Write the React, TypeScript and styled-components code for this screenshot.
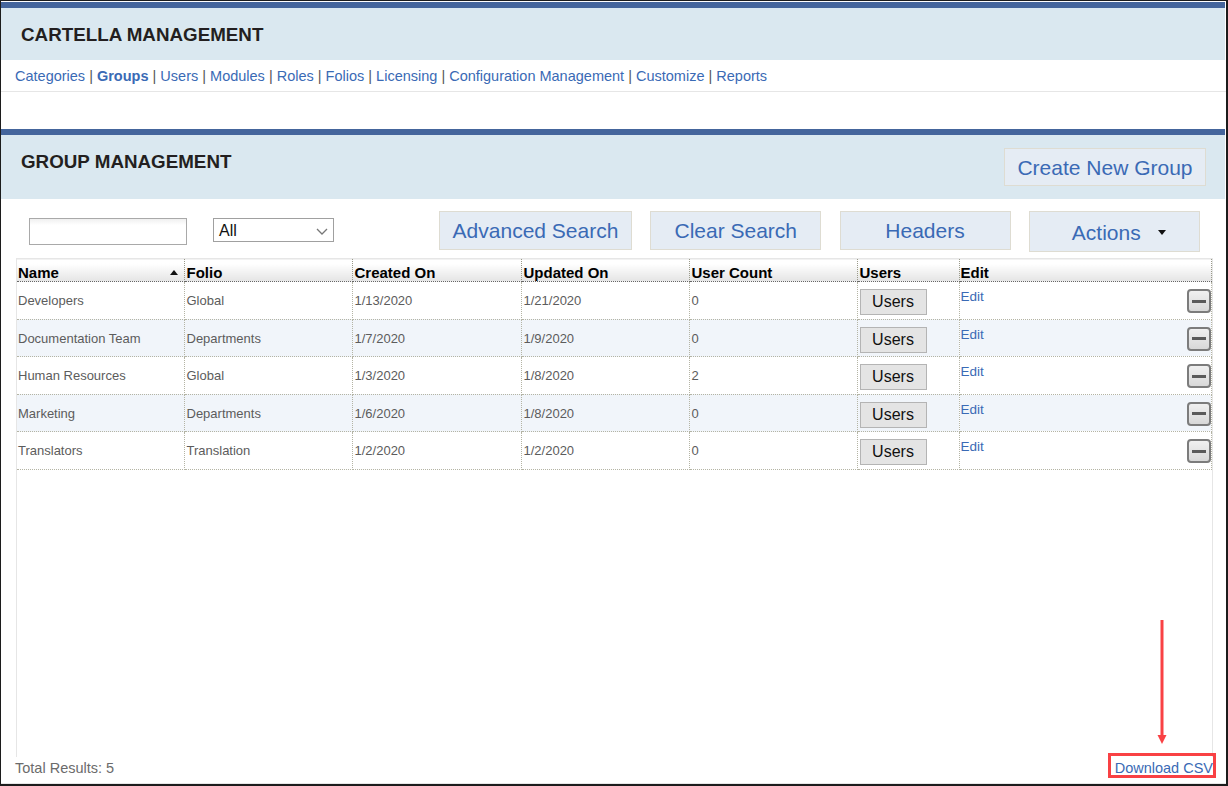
import styled, { createGlobalStyle } from 'styled-components';

const GlobalStyle = createGlobalStyle`
    html, body, #root {
        height: 100%;
        margin: 0;
    }
    body {
        font-family: "Liberation Sans", Arial, sans-serif;
        background: #fff;
    }
    * {
        box-sizing: border-box;
    }
`

const Frame = styled.div`
    position: relative;
    display: flex;
    flex-direction: column;
    width: 1228px;
    height: 786px;
    overflow: hidden;
    padding-top: 1px;
    border: solid #1c1c1c;
    border-width: 1px 2px 2px 1px;
    background: #fff;
`

const Banner = styled.header<{ $height: number }>`
    display: flex;
    justify-content: space-between;
    flex-shrink: 0;
    height: ${p => p.$height}px;
    margin-right: 1px;
    padding: 0 19px 0 20px;
    border-top: 6px solid #44659c;
    background: #dae8f0;
`

const Title = styled.h1<{ $top: number }>`
    margin: ${p => p.$top}px 0 0;
    color: #231f20;
    font-size: 18.8px;
    font-weight: 700;
    line-height: 22px;
`

const Nav = styled.nav`
    flex-shrink: 0;
    height: 32px;
    padding: 7px 0 0 14px;
    border-bottom: 1px solid #e6e6e6;
    color: #555;
    font-size: 14.5px;
    line-height: 18px;
`

const NavLink = styled.a<{ $active?: boolean }>`
    color: #3a6ab5;
    font-weight: ${p => (p.$active ? 700 : 400)};
`

const Spacer = styled.div`
    flex-shrink: 0;
    height: 37px;
`

const ActionButton = styled.button<{ $width: number }>`
    flex-shrink: 0;
    width: ${p => p.$width}px;
    height: 39px;
    padding: 0;
    border: 1px solid #dedcd2;
    background: #e5ecf4;
    color: #3a6ab5;
    font-family: inherit;
    font-size: 21px;
    line-height: 37px;
`

const CreateButton = styled(ActionButton)`
    height: 38px;
    margin-top: 13px;
`

const Toolbar = styled.div`
    display: flex;
    flex-shrink: 0;
    align-items: flex-start;
    height: 59px;
    padding: 12px 0 0 28px;
`

const SearchInput = styled.input`
    width: 158px;
    height: 27px;
    margin-top: 7px;
    border: 1px solid #a9a9a9;
    background: linear-gradient(#f0f0f0, #fff 6px);
`

const FilterSelect = styled.div`
    display: flex;
    align-items: center;
    justify-content: space-between;
    width: 121px;
    height: 24px;
    margin: 7px 105px 0 26px;
    padding: 2px 5px 0 5px;
    border: 1px solid #a0a0a0;
    color: #111;
    font-size: 16px;
`

const ToolbarButtons = styled.div`
    display: flex;
    gap: 18.25px;
`

const ActionsButton = styled(ActionButton)`
    display: flex;
    align-items: center;
    justify-content: center;
    gap: 17px;
    height: 41px;
    padding: 1px 0 0 9px;
`

const Caret = styled.span`
    width: 0;
    height: 0;
    border-top: 5px solid #111;
    border-right: 4.5px solid transparent;
    border-left: 4.5px solid transparent;
`

const TablePanel = styled.div`
    flex: 1;
    margin: 0 13px 0 15px;
    border-right: 1px solid #e6e6e6;
    border-left: 1px solid #e6e6e6;
`

const Table = styled.table`
    width: 100%;
    border-collapse: collapse;
    table-layout: fixed;
`

const HeadCell = styled.th<{ $width?: number }>`
    width: ${p => (p.$width ? `${p.$width}px` : 'auto')};
    height: 23px;
    padding: 5px 0 0 2px;
    border-top: 1px solid #e6e6e6;
    border-right: 1px dotted #9a9a8a;
    border-bottom: 1px dotted #666;
    background: linear-gradient(#fff 20%, #e4e4e4);
    color: #000;
    font-size: 15px;
    font-weight: 700;
    line-height: 16px;
    text-align: left;
    vertical-align: middle;

    &:first-child,
    &:last-child {
        padding-left: 1px;
    }
`

const HeadInner = styled.div`
    display: flex;
    align-items: center;
    justify-content: space-between;
    padding-right: 6px;
`

const SortArrow = styled.span`
    width: 0;
    height: 0;
    border-right: 4.5px solid transparent;
    border-bottom: 5px solid #111;
    border-left: 4.5px solid transparent;
`

const Row = styled.tr<{ $striped: boolean }>`
    height: 37.5px;
    background: ${p => (p.$striped ? '#f1f5fa' : '#fff')};
`

const Cell = styled.td`
    padding: 2px 0 0 2px;
    border-right: 1px dotted #b4b4a4;
    border-bottom: 1px dotted #b4b4a4;
    color: #5c5c5c;
    font-size: 13px;
    line-height: 14px;
    vertical-align: middle;

    &:first-child {
        padding-left: 1px;
    }
`

const EditCell = styled(Cell)`
    position: relative;
    padding-bottom: 8px;
    padding-left: 1px;
`

const EditLink = styled.a`
    color: #3a6ab5;
    font-size: 13.5px;
`

const UsersButton = styled.button`
    display: block;
    width: 67px;
    height: 26px;
    margin: 2px 0 0;
    padding: 0;
    border: 1px solid #b4b4b4;
    background: #e4e4e4;
    color: #111;
    font-family: inherit;
    font-size: 16px;
`

const RemoveButton = styled.button`
    position: absolute;
    top: 7px;
    right: 0;
    display: flex;
    align-items: center;
    justify-content: center;
    width: 24px;
    height: 24px;
    padding: 0;
    border: 2px solid #7c7c7c;
    border-radius: 4px;
    background: linear-gradient(#f0f0f0, #d8d8d8);
`

const MinusBar = styled.span`
    width: 14px;
    height: 3px;
    background: #5a5a5a;
`

const Footer = styled.footer`
    display: flex;
    flex-shrink: 0;
    align-items: flex-start;
    justify-content: space-between;
    height: 27px;
    padding: 3px 13px 0 14px;
    border-bottom: 1px solid #e6e6e6;
    font-size: 14.5px;
    line-height: 16px;
`

const TotalResults = styled.span`
    color: #6b6b6b;
`

const DownloadLink = styled.a`
    color: #3a6ab5;
`

const Highlight = styled.div`
    position: absolute;
    top: 752px;
    left: 1107px;
    width: 108px;
    height: 25px;
    border: 3px solid #f94144;
    pointer-events: none;
`

const Arrow = styled.svg`
    position: absolute;
    top: 619px;
    left: 1154px;
    pointer-events: none;
`

const groups = [
    { name: 'Developers', folio: 'Global', created: '1/13/2020', updated: '1/21/2020', count: 0 },
    { name: 'Documentation Team', folio: 'Departments', created: '1/7/2020', updated: '1/9/2020', count: 0 },
    { name: 'Human Resources', folio: 'Global', created: '1/3/2020', updated: '1/8/2020', count: 2 },
    { name: 'Marketing', folio: 'Departments', created: '1/6/2020', updated: '1/8/2020', count: 0 },
    { name: 'Translators', folio: 'Translation', created: '1/2/2020', updated: '1/2/2020', count: 0 },
];

const navItems = [
    'Categories', 'Groups', 'Users', 'Modules', 'Roles', 'Folios',
    'Licensing', 'Configuration Management', 'Customize', 'Reports',
];

const App = () => (
    <Frame>
        <GlobalStyle />
        <Banner $height={58}>
            <Title $top={16}>CARTELLA MANAGEMENT</Title>
        </Banner>
        <Nav>
            {navItems.map((item, i) => (
                <span key={item}>
                    {i > 0 && ' | '}
                    <NavLink $active={item === 'Groups'}>{item}</NavLink>
                </span>
            ))}
        </Nav>
        <Spacer />
        <Banner $height={70}>
            <Title $top={16}>GROUP MANAGEMENT</Title>
            <CreateButton $width={202}>Create New Group</CreateButton>
        </Banner>
        <Toolbar>
            <SearchInput />
            <FilterSelect>
                All
                <svg width="12" height="7" viewBox="0 0 12 7" fill="none" stroke="#777" strokeWidth="1.3">
                    <path d="M1 1l5 5 5-5" />
                </svg>
            </FilterSelect>
            <ToolbarButtons>
                <ActionButton $width={193}>Advanced Search</ActionButton>
                <ActionButton $width={171}>Clear Search</ActionButton>
                <ActionButton $width={171}>Headers</ActionButton>
                <ActionsButton $width={171}>
                    Actions
                    <Caret />
                </ActionsButton>
            </ToolbarButtons>
        </Toolbar>
        <TablePanel>
            <Table>
                <thead>
                    <tr>
                        <HeadCell $width={167}>
                            <HeadInner>
                                Name
                                <SortArrow />
                            </HeadInner>
                        </HeadCell>
                        <HeadCell $width={168}>Folio</HeadCell>
                        <HeadCell $width={169}>Created On</HeadCell>
                        <HeadCell $width={168}>Updated On</HeadCell>
                        <HeadCell $width={168}>User Count</HeadCell>
                        <HeadCell $width={102}>Users</HeadCell>
                        <HeadCell>Edit</HeadCell>
                    </tr>
                </thead>
                <tbody>
                    {groups.map((group, i) => (
                        <Row key={group.name} $striped={i % 2 === 1}>
                            <Cell>{group.name}</Cell>
                            <Cell>{group.folio}</Cell>
                            <Cell>{group.created}</Cell>
                            <Cell>{group.updated}</Cell>
                            <Cell>{group.count}</Cell>
                            <Cell>
                                <UsersButton>Users</UsersButton>
                            </Cell>
                            <EditCell>
                                <EditLink>Edit</EditLink>
                                <RemoveButton>
                                    <MinusBar />
                                </RemoveButton>
                            </EditCell>
                        </Row>
                    ))}
                </tbody>
            </Table>
        </TablePanel>
        <Footer>
            <TotalResults>Total Results: 5</TotalResults>
            <DownloadLink>Download CSV</DownloadLink>
        </Footer>
        <Highlight />
        <Arrow width="14" height="126" viewBox="0 0 14 126">
            <path d="M7 0v116" stroke="#f94144" strokeWidth="3" />
            <path d="M2.5 115h9L7 124z" fill="#f94144" />
        </Arrow>
    </Frame>
);

export default App;
